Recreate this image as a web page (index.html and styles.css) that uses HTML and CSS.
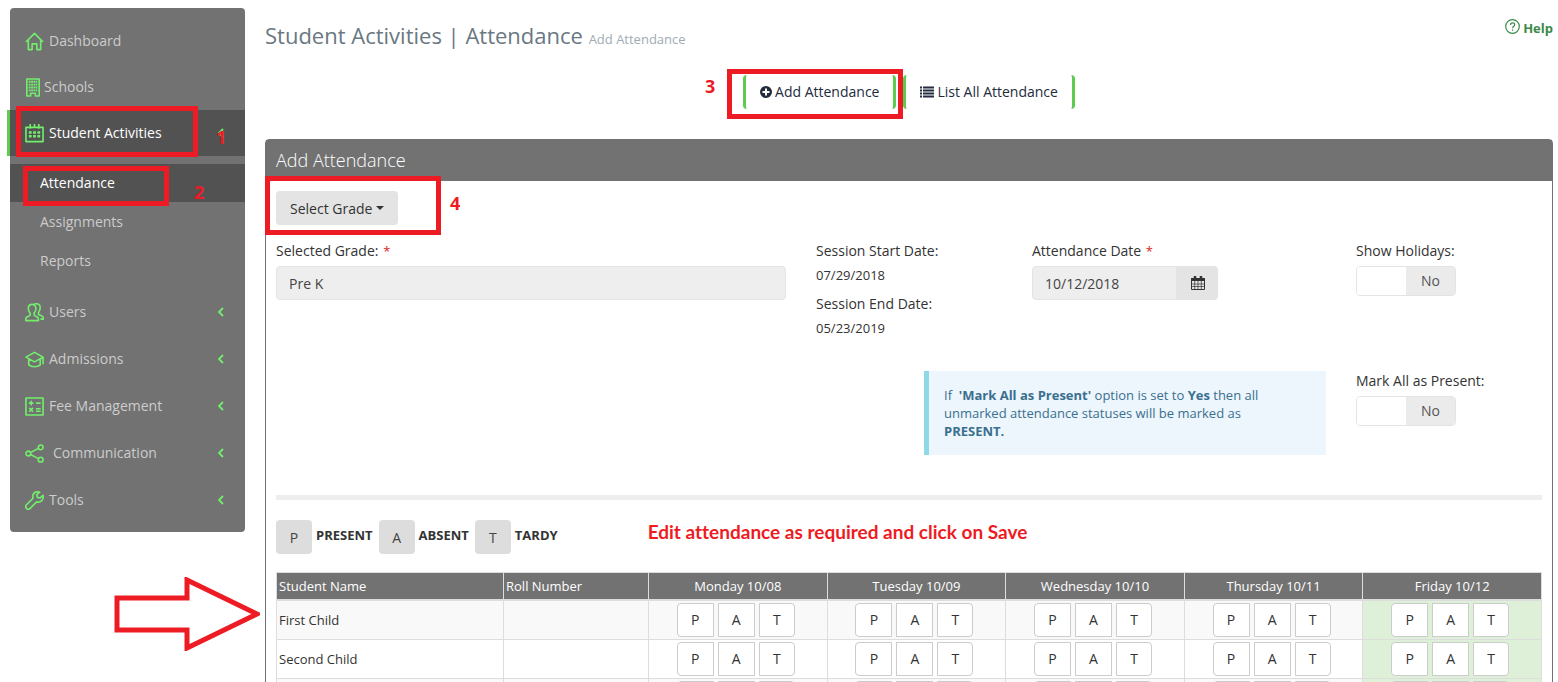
FILE: index.html
```
<!DOCTYPE html>
<html lang="en">
<head>
    <meta charset="UTF-8">
    <meta name="viewport" content="width=device-width, initial-scale=1.0">
    <title>Student Activities | Attendance</title>
    <link rel="stylesheet" href="styles.css">
</head>
<body>
<div class="page">
    <nav class="sidebar">
        <ul class="menu">
            <li><a href="#">
                <svg class="icon" viewBox="0 0 20 20"><path d="M1 10.5 10 1.5l9 9M3.5 8.500V18.500h4v-6h5v6h4V8.500"/></svg>
                Dashboard</a></li>
            <li><a href="#" class="schools">
                <svg class="icon building" viewBox="0 0 15 20"><path d="M1 1h13v18h-4v-3H5v3H1z"/><path class="windows" d="M3 4h9M3 7h9M3 10h9M3 13h9"/></svg>
                Schools</a></li>
            <li class="active"><a href="#">
                <svg class="icon" viewBox="0 0 20 20"><path d="M1 3.500h18v15H1zM5.500 0v5M14.500 0v5M10 0v3"/><path class="dots" d="M4 9h12M4 13h12"/></svg>
                Student Activities
                <svg class="chevron" viewBox="0 0 6 10"><path d="M5 1 1 5l4 4"/></svg></a>
                <span class="mark mark-activities"></span>
                <span class="step step-1">1</span>
                <ul class="submenu">
                    <li class="active"><a href="#">Attendance</a>
                        <span class="mark mark-attendance"></span>
                        <span class="step step-2">2</span>
                    </li>
                    <li><a href="#">Assignments</a></li>
                    <li><a href="#">Reports</a></li>
                </ul>
            </li>
            <li><a href="#">
                <svg class="icon" viewBox="0 0 20 20"><path d="M7.500 1.500c-2.700 0-4 2-4 4.300 0 2.200.8 3.700 1.900 4.900v2.300L1.700 15c-.8.500-1 1.700-.9 3.500h13.400c.1-1.800-.1-3-.9-3.500l-3.700-2v-2.300c1.100-1.200 1.900-2.700 1.900-4.900 0-2.300-1.300-4.300-4-4.300z"/><path d="M9.500 1.200C10.300.9 11.200.8 12 .8c2.700 0 4 2 4 4.300 0 2.200-.8 3.700-1.800 4.900v2l3.600 1.700c1.200.5 1.500 1.800 1.400 3.300h-3"/></svg>
                Users
                <svg class="chevron" viewBox="0 0 6 10"><path d="M5 1 1 5l4 4"/></svg></a></li>
            <li><a href="#">
                <svg class="icon" viewBox="0 0 20 20"><path d="M1 7.500 10 2.500l9 5-9 5zM4 9.500v6.200c1.500 1.500 3.500 2 6 2s4.500-.5 6-2V9.500M19 7.500V15"/></svg>
                Admissions
                <svg class="chevron" viewBox="0 0 6 10"><path d="M5 1 1 5l4 4"/></svg></a></li>
            <li><a href="#">
                <svg class="icon" viewBox="0 0 20 20"><path d="M1 1h18v18H1zM4 6.500h5M6.500 4v5M11.500 6.500h5M4.500 11.500l4 4M8.500 11.500l-4 4M11.500 12.300h5M11.500 15h5"/></svg>
                Fee Management
                <svg class="chevron" viewBox="0 0 6 10"><path d="M5 1 1 5l4 4"/></svg></a></li>
            <li><a href="#">
                <svg class="icon" viewBox="0 0 20 20"><circle cx="3.500" cy="10" r="2.500"/><circle cx="16.500" cy="3.500" r="2.500"/><circle cx="16.500" cy="16.500" r="2.500"/><path d="M5.800 9l8.400-4.400M5.800 11l8.400 4.400"/></svg>
                <span class="spaced">Communication</span>
                <svg class="chevron" viewBox="0 0 6 10"><path d="M5 1 1 5l4 4"/></svg></a></li>
            <li><a href="#">
                <svg class="icon" viewBox="0 0 20 20"><path d="M15.500 1.300c-2.400-1-5-.4-6.300 1.400-1.100 1.500-1.200 3.300-.7 4.900L1.600 14.500c-1 1-1 2.700 0 3.800 1.100 1 2.800 1 3.800 0l6.800-6.800c2 .6 4 .1 5.500-1.400 1.300-1.300 1.700-3.300 1.300-5.600l-3 2.800-3-.6-.6-2.900z"/></svg>
                Tools
                <svg class="chevron" viewBox="0 0 6 10"><path d="M5 1 1 5l4 4"/></svg></a></li>
        </ul>
    </nav>

    <main class="content">
        <header class="page-head">
            <h1>Student Activities | Attendance <small>Add Attendance</small></h1>
            <a href="#" class="help">
                <svg viewBox="0 0 15 15"><circle cx="7.500" cy="7.500" r="6.800"/><path d="M5.500 6c0-2.800 4.200-2.600 4.200-.2 0 1.500-2.100 1.600-2.100 3.500M7.600 10.500v1.300"/></svg>
                Help</a>
        </header>

        <div class="actions">
            <div class="action-wrap">
                <a href="#" class="action">
                    <svg class="plus" viewBox="0 0 12 12"><circle cx="6" cy="6" r="6"/><path d="M6 2.500v7M2.500 6h7"/></svg>
                    Add Attendance</a>
                <span class="mark mark-add"></span>
                <span class="step step-3">3</span>
            </div>
            <a href="#" class="action">
                <svg class="list" viewBox="0 0 14 12"><path d="M0 1.500h2M0 4.500h2M0 7.500h2M0 10.500h2M3 1.500h11M3 4.500h11M3 7.500h11M3 10.500h11"/></svg>
                List All Attendance</a>
        </div>

        <section class="panel">
            <h2>Add Attendance</h2>
            <div class="panel-body">
                <div class="grade-picker">
                    <button type="button" class="btn-grade">Select Grade <span class="caret"></span></button>
                    <span class="mark mark-grade"></span>
                    <span class="step step-4">4</span>
                </div>

                <form class="form-grid">
                    <div class="col-grade">
                        <label for="grade">Selected Grade: <span class="required">*</span></label>
                        <input type="text" id="grade" class="text-box" value="Pre K" readonly>
                    </div>
                    <div class="col-session">
                        <h3>Session Start Date:</h3>
                        <p>07/29/2018</p>
                        <h3>Session End Date:</h3>
                        <p>05/23/2019</p>
                    </div>
                    <div class="col-date">
                        <label for="date">Attendance Date <span class="required">*</span></label>
                        <div class="date-group">
                            <input type="text" id="date" class="text-box" value="10/12/2018" readonly>
                            <button type="button" aria-label="Pick a date">
                                <svg viewBox="0 0 14 14"><path class="frame" d="M.5 2.500h13v11H.5z"/><path class="bar" d="M0 2h14v3H0z"/><path class="frame thin" d="M.5 8h13M.5 10.500h13M3.700 5v8.500M7 5v8.500M10.300 5v8.500"/><path class="rings" d="M4 0v3.500M10 0v3.500"/></svg>
                            </button>
                        </div>
                    </div>
                    <div class="col-switch">
                        <label for="holidays">Show Holidays:</label>
                        <div class="switch"><input type="checkbox" id="holidays"><span>No</span></div>
                    </div>
                    <div class="note">
                        If &nbsp;<b>'Mark All as Present'</b> option is set to <b>Yes</b> then all unmarked attendance statuses will be marked as<br><b>PRESENT.</b>
                    </div>
                    <div class="col-switch">
                        <label for="mark-all">Mark All as Present:</label>
                        <div class="switch"><input type="checkbox" id="mark-all"><span>No</span></div>
                    </div>
                </form>

                <hr>

                <div class="legend">
                    <button type="button">P</button><b>PRESENT</b>
                    <button type="button">A</button><b>ABSENT</b>
                    <button type="button">T</button><b>TARDY</b>
                    <span class="hint">Edit attendance as required and click on Save</span>
                </div>

                <div class="table-wrap">
                    <svg class="arrow" viewBox="0 0 146 74"><path d="M3 21h70V3l70 34-70 34V53H3z"/></svg>
                    <table>
                        <thead>
                            <tr>
                                <th class="name">Student Name</th>
                                <th class="roll">Roll Number</th>
                                <th>Monday 10/08</th>
                                <th>Tuesday 10/09</th>
                                <th>Wednesday 10/10</th>
                                <th>Thursday 10/11</th>
                                <th>Friday 10/12</th>
                            </tr>
                        </thead>
                        <tbody>
                            <tr>
                                <td>First Child</td>
                                <td></td>
                                <td class="day"><button>P</button><button>A</button><button>T</button></td>
                                <td class="day"><button>P</button><button>A</button><button>T</button></td>
                                <td class="day"><button>P</button><button>A</button><button>T</button></td>
                                <td class="day"><button>P</button><button>A</button><button>T</button></td>
                                <td class="day today"><button>P</button><button>A</button><button>T</button></td>
                            </tr>
                            <tr>
                                <td>Second Child</td>
                                <td></td>
                                <td class="day"><button>P</button><button>A</button><button>T</button></td>
                                <td class="day"><button>P</button><button>A</button><button>T</button></td>
                                <td class="day"><button>P</button><button>A</button><button>T</button></td>
                                <td class="day"><button>P</button><button>A</button><button>T</button></td>
                                <td class="day today"><button>P</button><button>A</button><button>T</button></td>
                            </tr>
                            <tr>
                                <td></td>
                                <td></td>
                                <td class="day"><button>P</button><button>A</button><button>T</button></td>
                                <td class="day"><button>P</button><button>A</button><button>T</button></td>
                                <td class="day"><button>P</button><button>A</button><button>T</button></td>
                                <td class="day"><button>P</button><button>A</button><button>T</button></td>
                                <td class="day today"><button>P</button><button>A</button><button>T</button></td>
                            </tr>
                        </tbody>
                    </table>
                </div>
            </div>
        </section>
    </main>
</div>
</body>
</html>
```
FILE: styles.css
```
* {
    box-sizing: border-box;
}
body {
    margin: 0;
    font-family: "Open Sans", sans-serif;
    font-size: 14px;
    line-height: 20px;
    color: #333;
    background: #fff;
}
a {
    text-decoration: none;
}
button, input {
    font-family: inherit;
    font-size: 14px;
}
button {
    cursor: pointer;
}
.page {
    display: flex;
    align-items: flex-start;
    gap: 20px;
    height: 100vh;
    padding: 8px 5px 0 10px;
    overflow: hidden;
}

/* Sidebar */
.sidebar {
    flex: 0 0 235px;
    padding: 10px 0 8px;
    background: #727272;
    border-radius: 4px;
}
.menu, .submenu {
    margin: 0;
    padding: 0;
    list-style: none;
}
.menu li {
    position: relative;
    margin-bottom: 1px;
}
.menu a {
    display: flex;
    align-items: center;
    gap: 5px;
    height: 46px;
    padding: 0 21px 0 15px;
    color: #ccc;
}
.menu a.schools {
    gap: 3px;
    height: 44px;
}
.menu > .active > a {
    margin-left: -3px;
    border-left: 3px solid #5ccb50;
    background: #525252;
    color: #fff;
}
.submenu {
    padding: 8px 0 7px;
}
.menu .submenu a {
    height: 38px;
    padding-left: 30px;
}
.menu .submenu .active a {
    background: #525252;
    color: #fff;
}
.spaced {
    padding-left: 4px;
}
.icon {
    width: 19px;
    height: 19px;
    fill: none;
    stroke: #72ee6c;
    stroke-width: 1.7;
    stroke-linejoin: round;
}
.icon.building {
    width: 16px;
}
.icon .windows {
    stroke-width: 2;
    stroke-dasharray: 2 .5;
}
.icon .dots {
    stroke-width: 2.6;
    stroke-dasharray: 3 1.500;
}
.chevron {
    width: 6px;
    height: 10px;
    margin-left: auto;
    fill: none;
    stroke: #72ee6c;
    stroke-width: 1.8;
}

/* Page header */
.content {
    flex: 1;
    min-width: 0;
}
.page-head {
    display: flex;
    justify-content: space-between;
    padding-top: 9px;
}
h1 {
    margin: 0;
    font-size: 22px;
    font-weight: 400;
    line-height: 36px;
    color: #697882;
}
h1 small {
    font-size: 13px;
    color: #9eacb4;
}
.help {
    display: flex;
    gap: 3px;
    padding-top: 1px;
    font-size: 13px;
    font-weight: 700;
    color: #3b8a48;
}
.help svg {
    width: 15px;
    height: 15px;
    margin-top: 1px;
    fill: none;
    stroke: #3b8a48;
    stroke-width: 1.200;
}
.actions {
    display: flex;
    justify-content: center;
    gap: 7px;
    margin: 18px 0 30px;
}
.action-wrap, .grade-picker, .table-wrap {
    position: relative;
}
.action {
    display: flex;
    align-items: center;
    gap: 3px;
    height: 34px;
    padding: 0 14px;
    border: solid #5ccb50;
    border-width: 0 3px;
    border-radius: 4px;
    color: #222c3c;
}
.plus {
    width: 12px;
    fill: #222c3c;
    stroke: #fff;
    stroke-width: 0;
}
.plus path {
    stroke-width: 2;
}
.list {
    width: 14px;
    stroke: #222c3c;
    stroke-width: 2;
}

/* Panel */
.panel {
    border: 1px solid #727272;
    border-radius: 4px 4px 0 0;
}
h2 {
    margin: 0;
    padding: 0 10px;
    background: #727272;
    color: #fff;
    font-size: 18px;
    font-weight: 300;
    line-height: 41px;
}
.panel-body {
    padding: 10px;
}
.grade-picker {
    margin-bottom: 16px;
}
.btn-grade {
    display: flex;
    align-items: center;
    gap: 4px;
    height: 34px;
    padding: 0 14px;
    border: 0;
    border-radius: 4px;
    background: #e4e4e4;
    color: #333;
}
.caret {
    border: 4px solid transparent;
    border-top-color: #333;
    border-bottom: 0;
}
.form-grid {
    display: grid;
    grid-template-columns: repeat(12, 1fr);
    gap: 34px 30px;
}
.col-grade {
    grid-column: span 5;
}
.col-session, .col-switch {
    grid-column: span 2;
}
.col-date {
    grid-column: span 3;
}
.form-grid label {
    display: block;
    margin-bottom: 5px;
}
.required {
    margin-left: 1px;
    font-size: 13px;
    color: #e02222;
}
.text-box {
    width: 100%;
    height: 34px;
    padding: 1px 12px 0;
    border: 1px solid #e4e4e4;
    border-radius: 4px;
    background: #eee;
    color: #444;
}
.col-session h3 {
    margin: 0 0 5px;
    font-size: 14px;
    font-weight: 400;
    line-height: 20px;
}
.col-session p {
    margin: 0 0 10px;
    font-size: 13px;
    line-height: 18px;
}
.col-session p:last-child {
    margin: 0;
}
.date-group {
    display: flex;
    width: 186px;
}
.date-group .text-box {
    flex: 1;
    min-width: 0;
    border-radius: 4px 0 0 4px;
}
.date-group button {
    width: 41px;
    padding: 0;
    border: 0;
    border-radius: 0 4px 4px 0;
    background: #e4e4e4;
}
.date-group svg {
    display: block;
    width: 14px;
    height: 14px;
    margin: 0 auto;
}
.date-group .frame {
    fill: none;
    stroke: #333;
}
.date-group .thin {
    stroke-width: .7;
}
.date-group .bar {
    fill: #333;
}
.date-group .rings {
    stroke: #333;
    stroke-width: 2.500;
}
.switch {
    display: flex;
    width: 100px;
    height: 30px;
    border: 1px solid #e4e4e4;
    border-radius: 4px;
    overflow: hidden;
}
.switch input {
    flex: 1;
    margin: 0;
    appearance: none;
    background: #fff;
}
.switch span {
    flex: 1;
    background: #ebebeb;
    color: #555;
    line-height: 28px;
    text-align: center;
}
.note {
    grid-column: 7 / span 4;
    padding: 15px;
    border-left: 5px solid #8fd8e6;
    background: #edf6fc;
    color: #3a6f8f;
    font-size: 13px;
    line-height: 18px;
}
hr {
    height: 5px;
    margin: 40px 0 20px;
    border: 0;
    background: #eee;
}
.legend {
    display: flex;
    height: 34px;
    margin-bottom: 18px;
}
.legend button {
    width: 36px;
    border: 0;
    border-radius: 4px;
    background: #ddd;
    color: #444;
}
.legend b {
    margin: 0 6px 0 4px;
    padding-top: 5px;
    font-size: 13px;
}
.hint {
    margin-left: 84px;
    padding-top: 2px;
    color: #ed1c24;
    font-family: Lato, sans-serif;
    font-size: 19px;
    font-weight: 700;
    font-variant-ligatures: none;
}

/* Attendance table */
table {
    width: 100%;
    table-layout: fixed;
    border-collapse: collapse;
    font-size: 13px;
}
th, td {
    height: 39px;
    padding: 2px;
    border: 1px solid #ddd;
    text-align: left;
}
th {
    height: 27px;
    border-bottom-width: 2px;
    background: #727272;
    color: #fff;
    font-weight: 500;
    text-align: center;
}
.name {
    width: 227px;
    text-align: left;
}
.roll {
    width: 145px;
    text-align: left;
}
tbody tr:nth-child(odd) {
    background: #f9f9f9;
}
.day {
    text-align: center;
    white-space: nowrap;
    font-size: 0;
}
.day button {
    width: 37px;
    height: 34px;
    margin-right: 4px;
    padding: 0;
    border: 1px solid #ccc;
    background: #fff;
    color: #333;
}
.day button:first-child {
    border-radius: 4px 0 0 4px;
}
.day button:last-child {
    width: 36px;
    border-radius: 0 4px 4px 0;
}
tbody .today {
    background: #dff0d8;
}

/* Red walkthrough marks laid over the page */
.mark, .step, .arrow {
    position: absolute;
    z-index: 2;
    pointer-events: none;
}
.mark {
    border: 5px solid #ed1c24;
}
.step {
    color: #ed1c24;
    font-size: 18px;
    font-weight: 700;
}
.mark-activities {
    top: -4px;
    left: 6px;
    width: 182px;
    height: 51px;
}
.step-1 {
    top: 17px;
    left: 206px;
}
.mark-attendance {
    top: 2px;
    left: 13px;
    width: 146px;
    height: 40px;
}
.step-2 {
    top: 18px;
    left: 184px;
}
.mark-add {
    top: -6px;
    left: -16px;
    width: 176px;
    height: 50px;
}
.step-3 {
    top: 1px;
    left: -38px;
}
.mark-grade {
    top: -15px;
    left: -11px;
    width: 176px;
    height: 59px;
}
.step-4 {
    top: 2px;
    left: 174px;
}
.arrow {
    top: 5px;
    left: -162px;
    width: 146px;
    height: 74px;
    fill: none;
    stroke: #ed1c24;
    stroke-width: 5;
}
```
